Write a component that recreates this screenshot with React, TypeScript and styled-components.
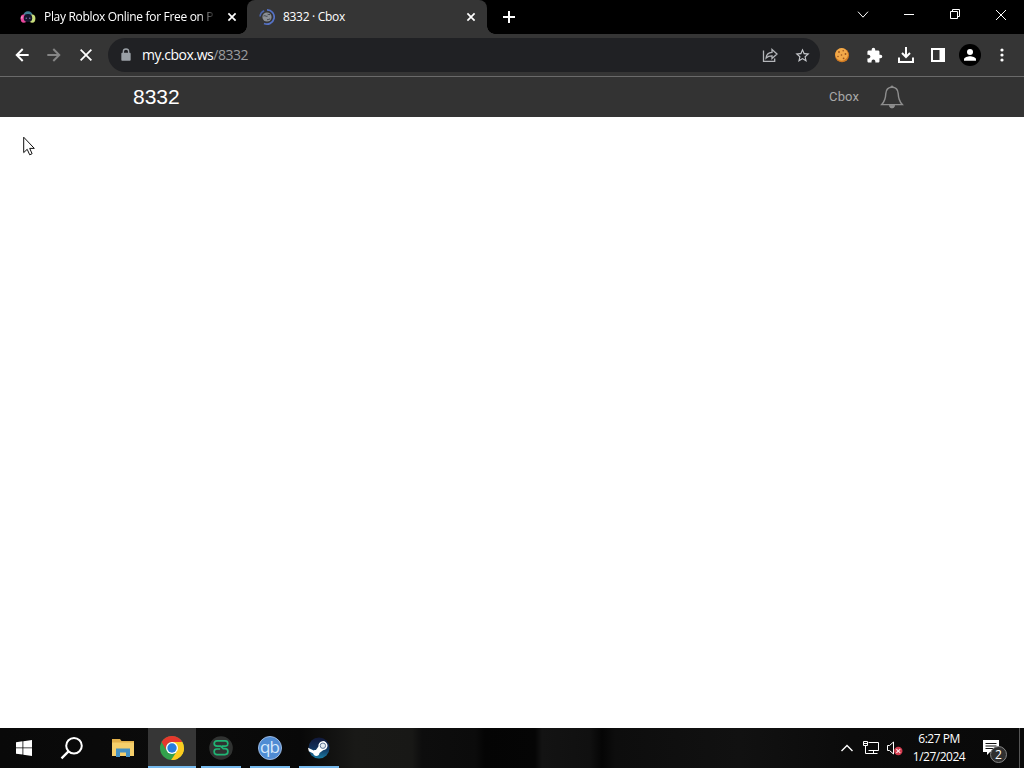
import React from 'react';
import type { FunctionComponent, ReactNode } from 'react';
import styled, { createGlobalStyle } from 'styled-components';

const white = '#ffffff';
const toolbarGray = '#353535';
const underlineBlue = '#76b9ed';
const uiFont = "'Open Sans', 'Noto Sans', sans-serif";

const GlobalStyle = createGlobalStyle`
  * {
    box-sizing: border-box;
  }

  body {
    margin: 0;
    background: ${white};
    overflow: hidden;
  }

  svg {
    display: block;
    flex: none;
  }
`;

const Screen = styled.div`
  display: flex;
  flex-direction: column;
  width: 1024px;
  height: 768px;
  font-family: ${uiFont};
  position: relative;
`;

const TabStrip = styled.div`
  display: flex;
  flex: none;
  height: 34px;
  padding-left: 8px;
  background: #000000;
`;

const Tab = styled.div<{ $active?: boolean }>`
  position: relative;
  display: flex;
  align-items: center;
  width: ${({ $active }) => ($active ? 240 : 239)}px;
  height: 34px;
  padding: 0 ${({ $active }) => ($active ? 8 : 7)}px 0 12px;
  border-radius: 8px 8px 0 0;
  background: ${({ $active }) => ($active ? toolbarGray : 'transparent')};

  &::before,
  &::after {
    content: '';
    display: ${({ $active }) => ($active ? 'block' : 'none')};
    position: absolute;
    bottom: 0;
    width: 8px;
    height: 8px;
  }

  &::before {
    left: -8px;
    background: radial-gradient(circle at 0 0, transparent 7.5px, ${toolbarGray} 8px);
  }

  &::after {
    right: -8px;
    background: radial-gradient(circle at 100% 0, transparent 7.5px, ${toolbarGray} 8px);
  }
`;

const TabTitle = styled.div<{ $fade?: boolean; $spacing: number }>`
  flex: 1;
  margin-left: 8px;
  margin-right: 8px;
  white-space: nowrap;
  color: ${white};
  font-size: 12px;
  line-height: 18px;
  letter-spacing: ${({ $spacing }) => $spacing}px;
  mask-image: ${({ $fade }) =>
    $fade ? 'linear-gradient(to right, #000 154px, transparent 172px)' : 'none'};
`;

const NewTab = styled.div`
  display: flex;
  align-items: center;
  justify-content: center;
  width: 28px;
  margin-left: 8px;
`;

const WindowControls = styled.div`
  display: flex;
  margin-left: auto;
`;

const WindowButton = styled.div`
  display: flex;
  align-items: center;
  justify-content: center;
  width: 46px;
  height: 29px;
`;

const Toolbar = styled.div`
  display: flex;
  align-items: center;
  flex: none;
  height: 43px;
  padding: 0 6px;
  border-bottom: 1px solid #6a6a6a;
  background: ${toolbarGray};
`;

const ToolButton = styled.div`
  display: flex;
  align-items: center;
  justify-content: center;
  width: 32px;
  height: 34px;
`;

const AddressBar = styled.div`
  display: flex;
  align-items: center;
  width: 712px;
  height: 34px;
  margin: 0 6px;
  padding: 0 2px 0 10px;
  border-radius: 17px;
  background: #202124;
`;

const Address = styled.div`
  flex: 1;
  margin-left: 8px;
  color: #9a9b9e;
  font-size: 14px;
  line-height: 20px;
  letter-spacing: -0.46px;
`;

const Host = styled.span`
  color: ${white};
`;

const SiteHeader = styled.header`
  display: flex;
  align-items: center;
  flex: none;
  height: 40px;
  padding: 0 120px 0 133px;
  background: #333333;
`;

const SiteTitle = styled.div`
  color: ${white};
  font-family: 'Liberation Sans', Arial, sans-serif;
  font-size: 21px;
  line-height: 24px;
`;

const SiteLink = styled.div`
  margin-left: auto;
  margin-right: 21px;
  color: #a8a8a8;
  font-family: Roboto, 'Liberation Sans', sans-serif;
  font-size: 13px;
  line-height: 20px;
  letter-spacing: 0.1px;
`;

const Page = styled.main`
  flex: 1;
  background: ${white};
`;

const Taskbar = styled.div`
  display: flex;
  flex: none;
  height: 40px;
  background: linear-gradient(
    to right,
    #090909 0,
    #0b0b0b 190px,
    #080808 300px,
    #191917 355px,
    #181816 412px,
    #0d0d0d 422px,
    #0b0b0b 475px,
    #040404 485px,
    #050505 535px,
    #131313 542px,
    #101010 590px,
    #050505 602px,
    #0d0d0d 615px,
    #111111 740px,
    #0b0b0b 850px,
    #090909 1024px
  );
`;

const TaskButton = styled.div<{ $active?: boolean; $running?: boolean }>`
  display: flex;
  position: relative;
  align-items: center;
  justify-content: center;
  width: 48px;
  margin-right: 1px;
  background: ${({ $active }) => ($active ? '#363636' : 'transparent')};

  &::after {
    content: '';
    display: ${({ $running }) => ($running ? 'block' : 'none')};
    position: absolute;
    bottom: 0;
    left: ${({ $active }) => ($active ? 0 : 4)}px;
    right: ${({ $active }) => ($active ? 0 : 4)}px;
    height: 2px;
    background: ${underlineBlue};
  }
`;

const ShellButton = styled.div`
  display: flex;
  align-items: center;
  justify-content: center;
  width: 48px;
`;

const PinnedApps = styled.div`
  display: flex;
  margin-left: 3px;
`;

const Tray = styled.div`
  display: flex;
  margin-left: auto;
`;

const TrayIcon = styled.div`
  display: flex;
  align-items: center;
  justify-content: center;
  width: 24px;
`;

const Clock = styled.div`
  width: 64px;
  padding-top: 2px;
  color: ${white};
  font-size: 12px;
  line-height: 18px;
  letter-spacing: -0.5px;
  text-align: center;
  white-space: nowrap;
`;

const Notifications = styled.div`
  display: flex;
  position: relative;
  width: 48px;
  padding: 12px 0 0 12px;
`;

const Badge = styled.span`
  position: absolute;
  left: 19px;
  top: 18px;
  width: 17px;
  height: 17px;
  border: 1px solid #858585;
  border-radius: 50%;
  background: #303030;
  color: ${white};
  font-size: 12px;
  line-height: 15px;
  text-align: center;
`;

const ShowDesktop = styled.div`
  width: 5px;
  border-left: 1px solid #555555;
`;

const Cursor = styled.svg`
  position: absolute;
  left: 23px;
  top: 136px;
`;

interface IconProps {
  size?: number;
  color?: string;
  children: ReactNode;
}

const Glyph: FunctionComponent<IconProps> = ({ size = 20, color = white, children }) => (
  <svg width={size} height={size} viewBox="0 0 24 24" fill={color}>
    {children}
  </svg>
);

const TabClose = () => (
  <svg width="16" height="16" viewBox="0 0 16 16" stroke={white} strokeWidth="1.7">
    <path d="M4.4 4.4l7.2 7.2M11.6 4.4l-7.2 7.2" />
  </svg>
);

const RobloxFavicon = () => (
  <svg width="16" height="16" viewBox="0 0 16 16">
    <path d="M3.4 6.5C3.4 3.8 5.4 2.2 8 2.2s4.6 1.6 4.6 4.3L11 8H5z" fill="#3f7f93" />
    <ellipse cx="3.8" cy="9.6" rx="3.2" ry="4.2" fill="#e8479c" />
    <ellipse cx="12.2" cy="9.6" rx="3.2" ry="4.2" fill="#c9de7c" />
    <path d="M2.4 6.8C1.4 7.3.7 8.4.7 9.6h2z" fill="#f39ac6" />
    <rect x="3.8" y="5" width="8.4" height="8" rx="3.8" fill="#14162c" />
    <circle cx="6.3" cy="9.2" r=".8" fill="#7c6aa8" />
    <circle cx="9.7" cy="9.2" r=".8" fill="#7c6aa8" />
  </svg>
);

const LoadingFavicon = () => (
  <svg width="16" height="16" viewBox="0 0 16 16" fill="none">
    <circle cx="8" cy="8" r="4.6" fill="#8b8f96" />
    <path d="M4.5 7c1.6-1 2.8.9 4 .2M8 10.6c1.2.4 2-.6 3.2-.6M8.6 5.2c.8.6 1.6.2 2.4.4" stroke="#3c4048" />
    <path d="M8 .9a7.1 7.1 0 1 1-3 13.5" stroke="#5572c6" strokeWidth="1.7" />
    <path d="M1 7.5A7 7 0 0 1 5.2 1.7" stroke="#4a63ab" strokeWidth="1.5" />
  </svg>
);

const Cookie = () => (
  <svg width="16" height="16" viewBox="0 0 16 16">
    <circle cx="8" cy="8.2" r="7" fill="#d07a22" />
    <circle cx="7.6" cy="7.4" r="6.3" fill="#f2a949" />
    <g fill="#9a5420">
      <circle cx="5" cy="5" r=".9" />
      <circle cx="9.2" cy="3.7" r=".8" />
      <circle cx="11.5" cy="7" r=".9" />
      <circle cx="7.5" cy="8" r=".8" />
      <circle cx="4" cy="9.5" r=".8" />
      <circle cx="9.6" cy="11.3" r=".9" />
    </g>
  </svg>
);

const Bell = () => (
  <svg width="24" height="24" viewBox="0 0 24 24" fill="none" stroke="#8e8e8e" strokeWidth="1.4">
    <path d="M12 2.2c4 0 6 2.8 6.2 6.4.2 5 1.3 8 4.1 11H1.7c2.8-3 3.9-6 4.1-11C6 5 8 2.2 12 2.2z" />
    <path d="M9.4 20.2h5.2a2.6 2.8 0 0 1-5.2 0zM10.8 2.1a1.2 1.2 0 0 1 2.4 0z" fill="#8e8e8e" strokeWidth=".8" />
  </svg>
);

const Windows = () => (
  <svg width="16" height="16" viewBox="0 0 16 16" fill={white}>
    <path d="M0 2.2l6.5-.9v6.2H0zM7.3 1.2L16 0v7.5H7.3zM0 8.3h6.5v6.3L0 13.7zM7.3 8.3H16V16l-8.7-1.3z" />
  </svg>
);

const Search = () => (
  <svg width="24" height="24" viewBox="0 0 24 24" fill="none" stroke={white} strokeWidth="2">
    <circle cx="14" cy="9.7" r="7.8" />
    <path d="M8.5 15.4l-7 7" strokeWidth="2.3" />
  </svg>
);

const Explorer = () => (
  <svg width="22" height="18" viewBox="0 0 22 18">
    <path d="M0 0h8l1.5 2H22v15H0z" fill="#e2b04a" />
    <path d="M0 3.5h22V17H0z" fill="#f5cf6b" />
    <path d="M4 9.5h14V18h-4v-4.5H8V18H4z" fill="#4490c2" />
  </svg>
);

const Chrome = () => (
  <svg width="24" height="24" viewBox="0 0 24 24">
    <circle cx="12" cy="12" r="12" fill="#33a14c" />
    <path d="M12 12H24A12 12 0 0 1 11.1 24L17.2 15z" fill="#fbcb20" />
    <path d="M24 12a12 12 0 0 0-1.6-6H12v6l5.2 3L12 24a12 12 0 0 0 12-12z" fill="#fbcb20" />
    <path d="M1.6 6a12 12 0 0 1 20.8 0H12a6 6 0 0 0-5.2 9z" fill="#e6382d" />
    <circle cx="12" cy="12" r="6" fill={white} />
    <circle cx="12" cy="12" r="4.7" fill="#277dde" />
  </svg>
);

const GreenApp = () => (
  <svg width="24" height="24" viewBox="0 0 24 24" fill="none">
    <circle cx="12" cy="12" r="11.8" fill="#303231" />
    <path
      d="M18.8 8.6V7.4c0-1.6-1-2.6-2.6-2.6H8c-1.7 0-2.8 1-2.8 2.7 0 1.8 1.1 2.6 2.8 2.6h3.5l2.8 2.6H16c1.8 0 2.9 1 2.9 2.9s-1.1 3-2.9 3H8c-1.7 0-2.8-1-2.8-2.6v-.6c0-1.5 1-2.4 2.6-2.4h3.4M12.6 10.1h3.6c1.4 0 2.2-.5 2.6-1.5"
      stroke="#20b574"
      strokeWidth="1.7"
    />
  </svg>
);

const QbText = styled.text`
  font-family: ${uiFont};
  font-size: 17px;
  letter-spacing: -0.8px;
`;

const Qbittorrent = () => (
  <svg width="24" height="24" viewBox="0 0 24 24">
    <circle cx="12" cy="12" r="11.5" fill="#4f8bd3" stroke="#9dbae2" />
    <QbText x="11.6" y="16.8" textAnchor="middle" fill="#d5e8fc">
      qb
    </QbText>
  </svg>
);

const Steam = () => (
  <svg width="22" height="22" viewBox="0 0 22 22">
    <defs>
      <linearGradient id="steam" x2="0" y2="1">
        <stop stopColor="#11183a" />
        <stop offset=".5" stopColor="#12305a" />
        <stop offset="1" stopColor="#1a7ca4" />
      </linearGradient>
    </defs>
    <circle cx="11" cy="11" r="10.5" fill="url(#steam)" />
    <path d="M0 10.8l5.8 2.6c.7-.4 1.4-.5 2.1-.4l2.5-3.6a4.6 4.6 0 1 1 4.7 3.9l-3.6 2.6c-.1 1.8-1.5 3-3.2 3-1.6 0-2.8-1-3.1-2.4L.8 14.3z" fill={white} />
    <circle cx="14.9" cy="8.7" r="2.7" fill="#e4ebf2" stroke="#5f7697" strokeWidth="1" />
  </svg>
);

const Network = () => (
  <svg width="17" height="16" viewBox="0 0 17 16" fill="none" stroke={white}>
    <path d="M5.5 2.5h10v8h-10M.5 1.5h4v4h-4zM2.5 5.5v8H8M10.5 10.5v3M6.5 13.5h8M1 3.5h3" />
  </svg>
);

const MutedSpeaker = () => (
  <svg width="18" height="16" viewBox="0 0 18 16" fill="none">
    <path d="M1.5 5.5h2l4-3.5v12l-4-3.5h-2z" stroke={white} />
    <circle cx="12.3" cy="11" r="4.2" fill="#d43d50" />
    <path d="M10.4 9.1l3.8 3.8M14.2 9.1l-3.8 3.8" stroke="#ffe0e2" strokeWidth="1.2" />
  </svg>
);

const App: FunctionComponent = () => (
  <>
    <GlobalStyle />
    <Screen>
      <TabStrip>
        <Tab>
          <RobloxFavicon />
          <TabTitle $fade $spacing={-0.32}>
            Play Roblox Online for Free on P
          </TabTitle>
          <TabClose />
        </Tab>
        <Tab $active>
          <LoadingFavicon />
          <TabTitle $spacing={-0.3}>8332 · Cbox</TabTitle>
          <TabClose />
        </Tab>
        <NewTab>
          <svg width="12" height="12" viewBox="0 0 12 12" stroke={white} strokeWidth="2">
            <path d="M6 0v12M0 6h12" />
          </svg>
        </NewTab>
        <WindowControls>
          <WindowButton>
            <svg width="12" height="12" viewBox="0 0 12 12" fill="none" stroke={white}>
              <path d="M1 2.7l5 5.5 5-5.5" />
            </svg>
          </WindowButton>
          <WindowButton>
            <svg width="10" height="11" viewBox="0 0 10 11" stroke={white}>
              <path d="M0 5.5h10" />
            </svg>
          </WindowButton>
          <WindowButton>
            <svg width="10" height="11" viewBox="0 0 10 11" fill="none" stroke={white}>
              <path d="M.5 2.5h7v7h-7zM2.5 2.5v-2h7v7h-2" />
            </svg>
          </WindowButton>
          <WindowButton>
            <svg width="10" height="10" viewBox="0 0 10 10" stroke={white}>
              <path d="M0 0l10 10M10 0L0 10" />
            </svg>
          </WindowButton>
        </WindowControls>
      </TabStrip>

      <Toolbar>
        <ToolButton>
          <Glyph size={20}>
            <path d="M20 10.8v2.4H8.6l5.1 5.1L12 20l-8-8 8-8 1.7 1.7-5.1 5.1z" />
          </Glyph>
        </ToolButton>
        <ToolButton>
          <Glyph size={20} color="#858585">
            <path d="M4 10.8v2.4h11.4l-5.1 5.1L12 20l8-8-8-8-1.7 1.7 5.1 5.1z" />
          </Glyph>
        </ToolButton>
        <ToolButton>
          <Glyph size={20}>
            <path d="M19.2 6.3L17.7 4.8 12 10.5 6.3 4.8 4.8 6.3l5.7 5.7-5.7 5.7 1.5 1.5 5.7-5.7 5.7 5.7 1.5-1.5-5.7-5.7z" />
          </Glyph>
        </ToolButton>
        <AddressBar>
          <Glyph size={16} color="#9aa0a6">
            <path d="M17.5 8.5H17V7A5 5 0 0 0 7 7v1.5h-.5C5.7 8.5 5 9.2 5 10v9c0 .8.7 1.5 1.5 1.5h11c.8 0 1.5-.7 1.5-1.5v-9c0-.8-.7-1.5-1.5-1.5zM9 7a3 3 0 0 1 6 0v1.5H9z" />
          </Glyph>
          <Address>
            <Host>my.cbox.ws</Host>/8332
          </Address>
          <ToolButton>
            <svg width="16" height="16" viewBox="0 0 16 16" fill="none" stroke="#b4b6ba" strokeWidth="1.3">
              <path d="M1.5 3.5v10.8h11.2v-2.8M4.1 11C4.3 7.5 6.4 5.5 10 5.3V2.5l5 4.6-5 4.5V8.8C7.2 8.8 5.5 9.5 4.1 11z" />
            </svg>
          </ToolButton>
          <ToolButton>
            <Glyph size={17} color="#c6c8cc">
              <path d="M22 9.24l-7.19-.62L12 2 9.19 8.63 2 9.24l5.46 4.73L5.82 21 12 17.27 18.18 21l-1.63-7.03L22 9.24zM12 15.4l-3.76 2.27 1-4.28-3.32-2.88 4.38-.38L12 6.1l1.71 4.04 4.38.38-3.32 2.88 1 4.28L12 15.4z" />
            </Glyph>
          </ToolButton>
        </AddressBar>
        <ToolButton>
          <Cookie />
        </ToolButton>
        <ToolButton>
          <Glyph size={17}>
            <path d="M20.5 11H19V7c0-1.1-.9-2-2-2h-4V3.5a2.5 2.5 0 0 0-5 0V5H4c-1.1 0-1.99.9-1.99 2v3.8H3.5c1.49 0 2.7 1.21 2.7 2.7s-1.21 2.7-2.7 2.7H2V20c0 1.1.9 2 2 2h3.8v-1.5c0-1.49 1.21-2.7 2.7-2.7s2.7 1.21 2.7 2.7V22H17c1.1 0 2-.9 2-2v-4h1.5a2.5 2.5 0 0 0 0-5z" />
          </Glyph>
        </ToolButton>
        <ToolButton>
          <svg width="16" height="16" viewBox="0 0 16 16" fill="none" stroke={white} strokeWidth="2">
            <path d="M8 0v9.5M4 6l4 4 4-4M1 10.5V15h14v-4.5" />
          </svg>
        </ToolButton>
        <ToolButton>
          <svg width="14" height="14" viewBox="0 0 14 14">
            <path d="M1 1h12v12H1z" fill="none" stroke={white} strokeWidth="2" />
            <path d="M8.5 1H13v12H8.5z" fill={white} />
          </svg>
        </ToolButton>
        <ToolButton>
          <svg width="22" height="22" viewBox="0 0 22 22">
            <circle cx="11" cy="11" r="11" fill="#000000" />
            <circle cx="11" cy="8" r="3" fill={white} />
            <path d="M5 16.8v-1.6c0-2 4-3 6-3s6 1 6 3v1.6z" fill={white} />
          </svg>
        </ToolButton>
        <ToolButton>
          <svg width="4" height="14" viewBox="0 0 4 14" fill={white}>
            <circle cx="2" cy="2" r="1.6" />
            <circle cx="2" cy="7" r="1.6" />
            <circle cx="2" cy="12" r="1.6" />
          </svg>
        </ToolButton>
      </Toolbar>

      <SiteHeader>
        <SiteTitle>8332</SiteTitle>
        <SiteLink>Cbox</SiteLink>
        <Bell />
      </SiteHeader>
      <Page />

      <Taskbar>
        <ShellButton>
          <Windows />
        </ShellButton>
        <ShellButton>
          <Search />
        </ShellButton>
        <PinnedApps>
          <TaskButton>
            <Explorer />
          </TaskButton>
          <TaskButton $active $running>
            <Chrome />
          </TaskButton>
          <TaskButton $running>
            <GreenApp />
          </TaskButton>
          <TaskButton $running>
            <Qbittorrent />
          </TaskButton>
          <TaskButton $running>
            <Steam />
          </TaskButton>
        </PinnedApps>
        <Tray>
          <TrayIcon>
            <svg width="14" height="10" viewBox="0 0 14 10" fill="none" stroke={white} strokeWidth="1.4">
              <path d="M1.5 8L7 2.5 12.5 8" />
            </svg>
          </TrayIcon>
          <TrayIcon>
            <Network />
          </TrayIcon>
          <TrayIcon>
            <MutedSpeaker />
          </TrayIcon>
          <Clock>
            6:27 PM
            <br />
            1/27/2024
          </Clock>
          <Notifications>
            <svg width="16" height="16" viewBox="0 0 16 16">
              <path d="M0 0h16v12H7l-3 3v-3H0z" fill={white} />
              <path d="M2.5 3.5h11M2.5 6h11M2.5 8.5h8" stroke="#111111" />
            </svg>
            <Badge>2</Badge>
          </Notifications>
          <ShowDesktop />
        </Tray>
      </Taskbar>

      <Cursor width="12" height="20" viewBox="0 0 12 20" fill={white} stroke="#111111">
        <path d="M.7 1.2v15.4l3.5-3.3 2.5 5.5 2.4-1.1-2.4-5.3h4.6z" />
      </Cursor>
    </Screen>
  </>
);

export default App;
